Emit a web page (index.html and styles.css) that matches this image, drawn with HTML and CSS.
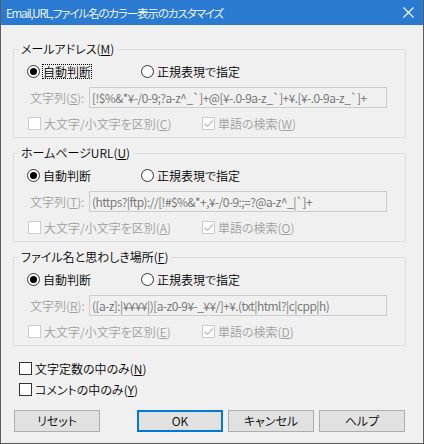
FILE: index.html
```html
<!DOCTYPE html>
<html lang="ja">
<head>
<meta charset="utf-8">
<link rel="stylesheet" href="styles.css">
</head>
<body>
<div class="window">
  <div class="titlebar">
    <span class="title">Email,URL,ファイル名のカラー表示のカスタマイズ</span>
    <svg class="close" width="11" height="11" viewBox="0 0 11 11"><path d="M0.5 0.5L10.5 10.5M10.5 0.5L0.5 10.5" stroke="#fff" stroke-width="1.1" fill="none"/></svg>
  </div>
  <div class="content">
    <fieldset class="group">
      <legend>メールアドレス(<u>M</u>)</legend>
      <div class="radios">
        <span class="radio first"><span class="rb on"></span><span class="focus">自動判断</span></span>
        <span class="radio"><span class="rb"></span>正規表現で指定</span>
      </div>
      <div class="pattern">
        <span class="plabel">文字列(<u>S</u>):</span>
        <div class="input">[!$%&amp;*¥-/0-9;?a-z^_`]+@[¥-.0-9a-z_`]+¥.[¥-.0-9a-z_`]+</div>
      </div>
      <div class="checks">
        <span class="cb dis first"><span class="box"></span>大文字/小文字を区別(<u>C</u>)</span>
        <span class="cb dis"><span class="box"><svg width="11" height="11" viewBox="0 0 11 11"><path d="M1.5 5.5L4.5 8.5L10 2.5" stroke="#bcbcbc" stroke-width="1.2" fill="none"/></svg></span>単語の検索(<u>W</u>)</span>
      </div>
    </fieldset>
    <fieldset class="group">
      <legend>ホームページURL(<u>U</u>)</legend>
      <div class="radios">
        <span class="radio first"><span class="rb on"></span><span class="nofocus">自動判断</span></span>
        <span class="radio"><span class="rb"></span>正規表現で指定</span>
      </div>
      <div class="pattern">
        <span class="plabel">文字列(<u>T</u>):</span>
        <div class="input">(https?|ftp)://[!#$%&amp;*+,¥-/0-9:;=?@a-z^_|`]+</div>
      </div>
      <div class="checks">
        <span class="cb dis first"><span class="box"></span>大文字/小文字を区別(<u>A</u>)</span>
        <span class="cb dis"><span class="box"><svg width="11" height="11" viewBox="0 0 11 11"><path d="M1.5 5.5L4.5 8.5L10 2.5" stroke="#bcbcbc" stroke-width="1.2" fill="none"/></svg></span>単語の検索(<u>O</u>)</span>
      </div>
    </fieldset>
    <fieldset class="group">
      <legend>ファイル名と思わしき場所(<u>F</u>)</legend>
      <div class="radios">
        <span class="radio first"><span class="rb on"></span><span class="nofocus">自動判断</span></span>
        <span class="radio"><span class="rb"></span>正規表現で指定</span>
      </div>
      <div class="pattern">
        <span class="plabel">文字列(<u>R</u>):</span>
        <div class="input">([a-z]:|¥¥¥¥|)[a-z0-9¥-_¥¥/]+¥.(txt|html?|c|cpp|h)</div>
      </div>
      <div class="checks">
        <span class="cb dis first"><span class="box"></span>大文字/小文字を区別(<u>E</u>)</span>
        <span class="cb dis"><span class="box"><svg width="11" height="11" viewBox="0 0 11 11"><path d="M1.5 5.5L4.5 8.5L10 2.5" stroke="#bcbcbc" stroke-width="1.2" fill="none"/></svg></span>単語の検索(<u>D</u>)</span>
      </div>
    </fieldset>
    <div class="opts">
      <span class="cb"><span class="box"></span>文字定数の中のみ(<u>N</u>)</span>
      <span class="cb"><span class="box"></span>コメントの中のみ(<u>Y</u>)</span>
    </div>
    <div class="btns">
      <span class="btn reset">リセット</span>
      <span class="btn ok">OK</span>
      <span class="btn">キャンセル</span>
      <span class="btn">ヘルプ</span>
    </div>
  </div>
</div>
</body>
</html>
```
FILE: styles.css
```css
* { box-sizing: border-box; }
html, body { margin: 0; padding: 0; background: #f0f0f0; }
body {
  font-family: "Noto Sans CJK JP", "Noto Sans", sans-serif;
  font-size: 12px;
  font-weight: 350;
  font-feature-settings: "palt";
  color: #000;
}
u { text-decoration-thickness: 1px; text-underline-offset: 1px; }
.window {
  width: 424px;
  height: 444px;
  border: 1px solid #5c5c5c;
  border-top: 0;
  background: #f0f0f0;
  display: flex;
  flex-direction: column;
}
.titlebar {
  height: 25px;
  background: #2a7ad2;
  color: #fff;
  display: flex;
  align-items: center;
  padding-left: 5px;
  flex: none;
}
.title { line-height: 16px; padding-top: 1px; font-size: 11.5px; letter-spacing: -1.1px; }
.close { margin-left: auto; margin-right: 9px; display: block; }
.content { padding: 16px 17px 0 12px; }
.group {
  margin: 0;
  padding: 6px 0 5px 0;
  border: 1px solid #dcdcdc;
  min-width: 0;
}
.group + .group { margin-top: 7px; }
.group legend {
  padding: 0 3px;
  margin-left: 4px;
  line-height: 16px;
}
.radios {
  display: flex;
  align-items: center;
  height: 17px;
  padding-left: 13px;
}
.radio { display: flex; align-items: center; line-height: 17px; }
.radio.first { width: 114px; }
.rb {
  width: 13px;
  height: 13px;
  border: 1px solid #333;
  border-radius: 50%;
  background: #fff;
  margin-right: 3px;
  display: flex;
  align-items: center;
  justify-content: center;
  flex: none;
}
.rb.on::after {
  content: "";
  width: 7px;
  height: 7px;
  border-radius: 50%;
  background: #000;
}
.focus { outline: 1px dotted #000; line-height: 13px; padding: 0 0 0 0; }
.pattern {
  display: flex;
  align-items: center;
  margin-top: 7px;
  padding-left: 16px;
}
.plabel { width: 59px; color: #a0a0a0; flex: none; }
.input {
  width: 298px;
  height: 21px;
  border: 1px solid #cccccc;
  padding-left: 2px;
  color: #6d6d6d;
  line-height: 19px;
  letter-spacing: -0.5px;
  white-space: nowrap;
  overflow: hidden;
}
.checks {
  display: flex;
  align-items: center;
  height: 17px;
  margin-top: 7px;
  padding-left: 14px;
}
.cb { display: flex; align-items: center; line-height: 17px; height: 17px; }
.cb.first { width: 174px; }
.cb.dis { color: #a0a0a0; }
.box {
  width: 13px;
  height: 13px;
  border: 1px solid #333;
  background: #fff;
  margin-right: 3px;
  flex: none;
  display: flex;
  align-items: center;
  justify-content: center;
}
.cb.dis .box { border-color: #cccccc; }
.opts {
  display: flex;
  flex-direction: column;
  gap: 4px;
  margin-top: 14px;
  padding-left: 6px;
}
.btns {
  display: flex;
  margin-top: 12px;
  padding-left: 1px;
}
.btn {
  width: 86px;
  height: 22px;
  border: 1px solid #adadad;
  background: #e1e1e1;
  display: flex;
  align-items: center;
  justify-content: center;
  margin-left: 5px;
  line-height: 16px;
}
.btn.reset { margin-left: 0; margin-right: 32px; }
.btn.ok { border: 2px solid #0078d7; }
```
